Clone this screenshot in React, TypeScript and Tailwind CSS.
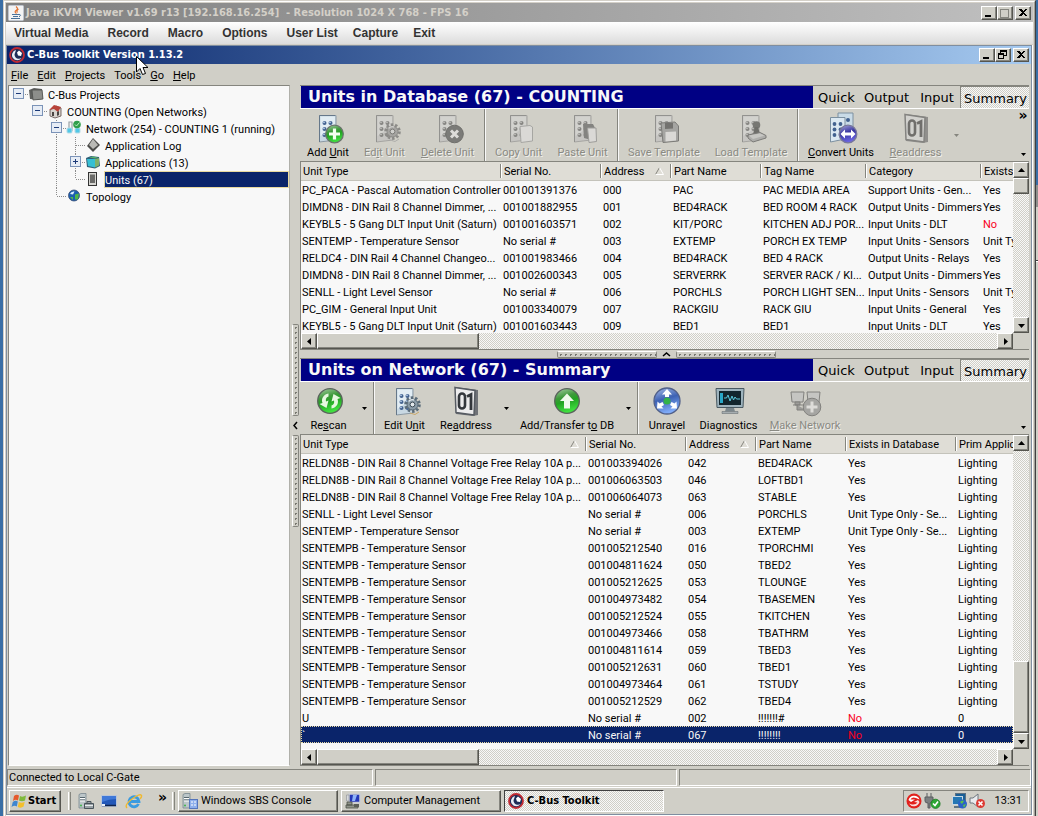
import type { ReactNode } from "react";

/* ---------- toolbar drawings ---------- */

function Sheet() {
  return (
    <>
      <path d="M6.500 1.500 L23 1.500 V26 L6.500 28 Z" fill="#c8d8e3" stroke="#8c9aa5" />
      <path d="M7.500 2.500 L22 2.500 V12 L7.500 22 Z" fill="#e2edf4" />
      <path d="M6.500 28 V1.500 H22" stroke="#66788a" fill="none" />
      {[9, 15, 21].map((y) => (
        <g key={y}>
          <circle cx="11.500" cy={y} r="2" fill="#41618f" />
          <circle cx="17.500" cy={y} r="2" fill="#41618f" />
          <circle cx="11" cy={y - 0.7} r="0.900" fill="#b9cfea" />
          <circle cx="17" cy={y - 0.7} r="0.900" fill="#b9cfea" />
        </g>
      ))}
    </>
  );
}

function Gear() {
  return (
    <>
      <circle cx="22.500" cy="17.500" r="6.800" fill="none" stroke="#5b6c79" strokeWidth="3" strokeDasharray="2.400 1.900" />
      <circle cx="22.500" cy="17.500" r="5.500" fill="#8a9ba7" stroke="#556673" />
      <circle cx="22.500" cy="17.500" r="2.400" fill="#e3e9ec" stroke="#3d4b56" />
      <path d="M18.500 14.500 A5 5 0 0 1 24 13" stroke="#dfe7ec" fill="none" strokeWidth="1.400" />
      <path d="M20 26 L25 27.500 L29 25" stroke="#c9a86a" fill="none" />
    </>
  );
}

function Digits() {
  return (
    <>
      <path d="M4 0 L27 3 L27 28 L22 29 L5 27 Z" fill="#6f7277" />
      <path d="M4 0.500 L24 3.500 L23 28 L5 25.500 Z" fill="#ececed" stroke="#565b62" strokeWidth="1.500" />
      <rect x="8" y="6.500" width="6" height="15" rx="3" fill="none" stroke="#33373c" strokeWidth="2.600" />
      <path d="M16 9.500 L20 7.500 V23" fill="none" stroke="#33373c" strokeWidth="2.800" />
    </>
  );
}

type IconName =
  | "add" | "edit" | "delete" | "copy" | "paste" | "save" | "load" | "convert" | "digits"
  | "rescan" | "transfer" | "unravel" | "diagnostics" | "network";

function ToolIcon({ name, disabled }: { name: IconName; disabled?: boolean }) {
  return (
    <svg width="32" height="31" viewBox="-1 0 32 31" aria-hidden="true" className={disabled ? "overflow-visible opacity-60 brightness-90 grayscale" : "overflow-visible"}>
      <defs>
        <linearGradient id="greenBall" x1="0" y1="0" x2="0.3" y2="1">
          <stop offset="0" stopColor="#a9cfa6" />
          <stop offset="0.4" stopColor="#3f9a3c" />
          <stop offset="0.6" stopColor="#23a323" />
          <stop offset="1" stopColor="#3fe03f" />
        </linearGradient>
        <linearGradient id="blueBall" x1="0" y1="0" x2="0.3" y2="1">
          <stop offset="0" stopColor="#a9bde8" />
          <stop offset="0.5" stopColor="#3d62b4" />
          <stop offset="1" stopColor="#7fabf8" />
        </linearGradient>
        <linearGradient id="violetBall" x1="0" y1="0" x2="0.3" y2="1">
          <stop offset="0" stopColor="#a8a8dc" />
          <stop offset="0.5" stopColor="#3a36a0" />
          <stop offset="1" stopColor="#6a64e0" />
        </linearGradient>
      </defs>
      {["add", "edit", "delete", "copy", "paste", "save", "load"].includes(name) && <Sheet />}
      {name === "add" && (
        <>
          <circle cx="21.500" cy="20" r="8.800" fill="url(#greenBall)" stroke="#6a746c" strokeWidth="1.300" />
          <path d="M21.500 14.500 V25.500 M16 20 H27" stroke="#f4fff0" strokeWidth="3.200" />
        </>
      )}
      {name === "edit" && <Gear />}
      {name === "delete" && (
        <>
          <circle cx="21.500" cy="20" r="8.800" fill="#4c4c4c" stroke="#333" />
          <path d="M18 16.500 L25 23.500 M25 16.500 L18 23.500" stroke="#fff" strokeWidth="3" />
        </>
      )}
      {name === "copy" && <path d="M16 12.500 L26 11.500 L28.500 13 L28.500 27 L17 28.500 Z" fill="#fafafa" stroke="#9a9a9a" />}
      {name === "paste" && (
        <>
          <path d="M15 10 L25 10 L27 14 V27 L16 24 Z" fill="#5a5a5a" />
          <path d="M19.500 14 L28 14 L28.500 27.500 L21 28.500 Z" fill="#fafafa" stroke="#8a8a8a" />
        </>
      )}
      {name === "save" && (
        <>
          <path d="M12 9 L26 8 L29.500 12 V27 L14 28.500 Z" fill="#999" stroke="#4a4a4a" />
          <path d="M16 9 L24 9 V14.500 L16 15 Z" fill="#3c3c3c" />
          <path d="M16.500 18 L27 17.500 V26.500 L16.500 27.500 Z" fill="#fafafa" />
        </>
      )}
      {name === "load" && (
        <>
          <circle cx="20.500" cy="11" r="3.800" fill="#444" />
          <path d="M19 13 H22 L24 20 H17 Z" fill="#333" />
          <path d="M12 21 L24 18.500 L30 21.500 V24 L17 28 L12 24 Z" fill="#aaa" stroke="#4a4a4a" />
          <path d="M13 21.500 L24 19.500 L28.500 21.500 L17 25 Z" fill="#d8d8d8" />
        </>
      )}
      {name === "convert" && (
        <>
          <path d="M12 -1 H27 V21 H12 Z" fill="#c9dbe7" stroke="#7c90a0" />
          <circle cx="22" cy="6" r="2" fill="#41618f" />
          <circle cx="16" cy="6" r="2" fill="#41618f" />
          <path d="M4.500 3.500 L19 3.500 V25 L4.500 28 Z" fill="#dbe8f1" stroke="#7c90a0" />
          {[10, 15.500, 21].map((y) => (
            <g key={y}>
              <circle cx="8.500" cy={y} r="1.900" fill="#41618f" />
              <circle cx="14.500" cy={y} r="1.900" fill="#41618f" />
            </g>
          ))}
          <circle cx="22" cy="20" r="8.800" fill="url(#violetBall)" stroke="#77779a" strokeWidth="1.300" />
          <path d="M14.500 20 L19 15.500 V18.500 H25 V15.500 L29.500 20 L25 24.500 V21.500 H19 V24.500 Z" fill="#fff" />
        </>
      )}
      {name === "digits" && <Digits />}
      {name === "rescan" && (
        <>
          <circle cx="16" cy="14" r="12.300" fill="url(#greenBall)" stroke="#5a635c" strokeWidth="1.300" />
          <path d="M14.500 6.500 C9 7.500 7 12 8.500 16 L5.500 17 L12.500 21 L14.500 13.500 L12 14.500 C11.500 12 12 10.500 14.500 9.500 Z" fill="#e6f8e0" />
          <path d="M17.500 21.500 C23 20.500 25 16 23.500 12 L26.500 11 L19.500 7 L17.500 14.500 L20 13.500 C20.500 16 20 17.500 17.500 18.500 Z" fill="#e6f8e0" />
        </>
      )}
      {name === "transfer" && (
        <>
          <circle cx="15" cy="14" r="12.300" fill="url(#greenBall)" stroke="#5a635c" strokeWidth="1.300" />
          <path d="M15 6.500 L22 14 H18 V21.500 H12 V14 H8 Z" fill="#f0fbec" />
        </>
      )}
      {name === "unravel" && (
        <>
          <circle cx="15" cy="14" r="13" fill="url(#blueBall)" stroke="#516089" strokeWidth="1.300" />
          <circle cx="15" cy="14" r="3.500" fill="#33b24a" />
          <path d="M15 2 L20 7.500 H17 V10 H13 V7.500 H10 Z" fill="#fff" />
          <path d="M5 21.500 L5.500 14.500 L7.500 16.500 L10.500 15 L12 18 L9.500 19.500 L11.500 21.500 Z" fill="#fff" />
          <path d="M25 21.500 L24.500 14.500 L22.500 16.500 L19.500 15 L18 18 L20.500 19.500 L18.500 21.500 Z" fill="#fff" />
        </>
      )}
      {name === "diagnostics" && (
        <>
          <path d="M2 1.500 H30 L29 20.500 H3 Z" fill="#9db3bd" stroke="#4a5a62" />
          <rect x="5" y="4" width="22" height="14" fill="#12262e" />
          <rect x="6" y="6" width="3" height="10" fill="#29a8c8" />
          <path d="M10 11 H12.500 L14 8 L16 14 L18 9 L19.500 13 L21 10 L22.500 12 H26" fill="none" stroke="#5ac8dc" />
          <path d="M12 21 H20 L21 24.500 H11 Z" fill="#7b878c" />
          <path d="M8 24.500 H24 V26.500 H8 Z" fill="#a5adb0" stroke="#5c6569" strokeWidth="0.500" />
        </>
      )}
      {name === "network" && (
        <>
          <path d="M1 5 H14 L13 15 H2 Z M17 5 H30 L29 15 H18 Z" fill="#d4d4d4" stroke="#555" />
          <path d="M5 15 H10 V18 H5 Z M18 15 H26 V18 H18 Z M3 18 H14 M7 18 V23 H16" fill="#888" stroke="#555" />
          <circle cx="22" cy="20" r="8.800" fill="#999" stroke="#555" />
          <path d="M22 14.500 V25.500 M16.500 20 H27.500" stroke="#fff" strokeWidth="3" />
        </>
      )}
    </svg>
  );
}

/* ---------- small window parts ---------- */

const DITHER =
  "bg-[repeating-conic-gradient(#f8f8f8_0_25%,#d0cfc7_0_50%)] bg-[length:2px_2px]";
const RAISED =
  "border border-t-white border-l-white border-r-[#55554f] border-b-[#55554f] bg-[#d0cfc7] shadow-[inset_-1px_-1px_0_#85857e]";

function CaptionButton({ kind, muted }: { kind: "min" | "max" | "restore" | "close"; muted?: boolean }) {
  return (
    <button
      type="button"
      aria-label={kind}
      className={`flex h-3.5 w-4 items-center justify-center ${kind === "close" ? "ml-0.5" : ""} ${RAISED}`}
    >
      <svg width="12" height="10" viewBox="0 0 12 10" aria-hidden="true" shapeRendering="crispEdges">
        {kind === "min" && <path d="M2 7 H8 V9 H2 Z" fill="#000" />}
        {kind === "max" && (
          <path d="M1.500 1 V9.500 H9.500 V1 Z M1 1.500 H10" fill="none" stroke={muted ? "#85857e" : "#000"} />
        )}
        {kind === "restore" && (
          <path d="M3.500 3 V0.500 H9.500 V5.500 H7 M3 1.500 H10 M1.500 3.500 H6.500 V8.500 H1.500 Z M1 4.500 H7" fill="none" stroke="#000" />
        )}
        {kind === "close" && (
          <path d="M2 1 H4 L6 3 L8 1 H10 L7 4.500 L10 8 H8 L6 6 L4 8 H2 L5 4.500 Z" fill="#000" />
        )}
      </svg>
    </button>
  );
}

function Arrow({ dir }: { dir: "up" | "down" | "left" | "right" }) {
  const paths = {
    up: "M1 6 L4.500 2 L8 6 Z",
    down: "M1 3 L4.500 7 L8 3 Z",
    left: "M6 1 L2 4.500 L6 8 Z",
    right: "M3 1 L7 4.500 L3 8 Z",
  };
  return (
    <svg width="9" height="9" viewBox="0 0 9 9" aria-hidden="true">
      <path d={paths[dir]} fill="#000" />
    </svg>
  );
}

function ScrollButton({ dir }: { dir: "up" | "down" | "left" | "right" }) {
  return (
    <button type="button" aria-label={`Scroll ${dir}`} className={`flex size-4 shrink-0 items-center justify-center ${RAISED}`}>
      <Arrow dir={dir} />
    </button>
  );
}

function HScroll() {
  return (
    <div className="flex h-4 shrink-0">
      <div className={`flex flex-1 ${DITHER}`}>
        <ScrollButton dir="left" />
        <div className={`w-[162px] ${RAISED}`} />
        <div className="flex-1" />
        <ScrollButton dir="right" />
      </div>
      <div className="w-4 bg-[#d0cfc7]" />
    </div>
  );
}

function VScroll({ atEnd }: { atEnd?: boolean }) {
  return (
    <div className={`flex w-4 shrink-0 flex-col ${DITHER}`}>
      <ScrollButton dir="up" />
      {atEnd && <div className="flex-1" />}
      <div className={`${atEnd ? "h-[72px]" : "h-4"} ${RAISED}`} />
      {!atEnd && <div className="flex-1" />}
      <ScrollButton dir="down" />
    </div>
  );
}

/* ---------- project tree ---------- */

type Cell = "blank" | "line" | "tee" | "end" | "minus" | "minusLine" | "plus";

function TreeCell({ kind }: { kind: Cell }) {
  const box = kind === "minus" || kind === "minusLine" || kind === "plus";
  return (
    <svg width="19" height="17" viewBox="0 0 19 17" aria-hidden="true" className="shrink-0" shapeRendering="crispEdges">
      <g stroke="#8c8c8c" strokeDasharray="1 1" fill="none">
        {(kind === "line" || kind === "tee" || kind === "minusLine" || kind === "plus") && <path d="M9.500 0 V17" />}
        {kind === "end" && <path d="M9.500 0 V8" />}
        {(kind === "tee" || kind === "end" || box) && <path d="M10 8.500 H19" />}
      </g>
      {box && (
        <>
          <rect x="4.500" y="2.500" width="10" height="10" fill="#e6ecf5" stroke="#7b93b8" />
          <path d="M7 7.500 H12" stroke="#1c3a78" />
          {kind === "plus" && <path d="M9.500 5 V10" stroke="#1c3a78" />}
        </>
      )}
    </svg>
  );
}

type TreeIconName = "folder" | "house" | "net" | "log" | "apps" | "unit" | "globe";

function TreeIcon({ name }: { name: TreeIconName }) {
  return (
    <svg width="17" height="17" viewBox="0 0 17 17" aria-hidden="true" className="shrink-0">
      {name === "folder" && (
        <>
          <path d="M1 4 L6 2 L14 3 L15 13 L10 14 L2 13 Z" fill="#5f605e" />
          <path d="M4 4 L14 4 L15 13 L5 14 Z" fill="#8d8e8b" stroke="#4e4f4d" strokeWidth="0.800" />
        </>
      )}
      {name === "house" && (
        <>
          <path d="M3 7 L9 3 L14 5 V13 L8 15 L3 13 Z" fill="#d8d4d0" stroke="#5a4a48" strokeWidth="0.800" />
          <path d="M2 7 L7 2 L14 4 L11 9 L7 6 Z" fill="#b8433a" />
          <path d="M5 9 H7 V13 H5 Z M10 9 L12 8 V12 L10 13 Z" fill="#4a4543" />
        </>
      )}
      {name === "net" && (
        <>
          <path d="M3 9 V2 H6 V11 M10 3 V11" fill="none" stroke="#9aa2a6" strokeWidth="1.200" />
          <rect x="1" y="8" width="5" height="5" rx="1" fill="#52c8e6" stroke="#b7dbe6" />
          <rect x="9" y="8" width="5" height="5" rx="1" fill="#52c8e6" stroke="#b7dbe6" />
          <circle cx="11" cy="4.500" r="3.800" fill="#2f9e4b" />
          <path d="M9 4.500 L10.500 6 L13.500 2.500" fill="none" stroke="#bff0c0" />
        </>
      )}
      {name === "log" && (
        <>
          <path d="M2 9 L8 1 L15 8 L8 15 Z" fill="#4b4b49" />
          <path d="M4 8 L8 2 L13 8 L8 12 Z" fill="#b9b9b5" />
        </>
      )}
      {name === "apps" && (
        <>
          <path d="M1 4 L6 2 L14 3 L15 12 L10 14.500 L2 13 Z" fill="#2d5f78" />
          <path d="M2 5 L10 5 L10 13.500 L3 12 Z" fill="#35bfd4" />
          <path d="M10 5 L14 4 L14 11.500 L10 13.500 Z" fill="#7fb06a" />
          <path d="M4 3.500 L8 2.500 L13 3.500 L10 4.500 Z" fill="#58b06a" />
        </>
      )}
      {name === "unit" && (
        <>
          <rect x="3.500" y="1.500" width="8" height="13" fill="#d6d6d2" stroke="#333" />
          <rect x="5" y="3.500" width="5" height="8.500" fill="#6a6a68" />
        </>
      )}
      {name === "globe" && (
        <>
          <circle cx="8" cy="7.500" r="5.500" fill="#1c5fb0" stroke="#3d5173" strokeWidth="0.800" />
          <path d="M9 6.500 L13 5.500 L12 11.500 L9 11.500 Z M4 9 L7 9 L7 12 Z" fill="#4fb84a" />
          <path d="M4 6 Q5 3 8.500 3.500 L7 6.500 Z" fill="#dff0ff" />
        </>
      )}
    </svg>
  );
}

const TREE: { cells: Cell[]; icon: TreeIconName; label: string; selected?: boolean }[] = [
  { cells: ["minus"], icon: "folder", label: "C-Bus Projects" },
  { cells: ["blank", "minus"], icon: "house", label: "COUNTING (Open Networks)" },
  { cells: ["blank", "blank", "minusLine"], icon: "net", label: "Network (254) - COUNTING 1 (running)" },
  { cells: ["blank", "blank", "line", "tee"], icon: "log", label: "Application Log" },
  { cells: ["blank", "blank", "line", "plus"], icon: "apps", label: "Applications (13)" },
  { cells: ["blank", "blank", "line", "end"], icon: "unit", label: "Units (67)", selected: true },
  { cells: ["blank", "blank", "end"], icon: "globe", label: "Topology" },
];

function ProjectTree() {
  return (
    <ul className="w-[282px] shrink-0 border border-[#85857e] border-r-[#b0b0aa] border-b-white bg-[#f8f8f8]">
      {TREE.map((row) => (
        <li key={row.label} className="flex h-[17px]">
          {row.cells.map((cell, i) => (
            <TreeCell key={i} kind={cell} />
          ))}
          <TreeIcon name={row.icon} />
          <span
            className={
              row.selected
                ? "ml-0.5 flex-1 border border-[#e8d9a0] bg-[#0a246a] pt-px leading-[15px] text-[#f8f8f8]"
                : "ml-0.5 flex-1 px-px pt-0.5 leading-[15px]"
            }
          >
            {row.label}
          </span>
        </li>
      ))}
    </ul>
  );
}

/* ---------- splitters ---------- */

function VSplitter() {
  const grip =
    "h-[92px] w-[7px] rounded-[2px] border border-[#85857e] border-l-white bg-[radial-gradient(circle,#77776f_1px,transparent_1px)] bg-[length:5px_5px]";
  return (
    <div className="flex w-2.5 shrink-0 flex-col items-center justify-center">
      <div className={grip} />
      <button type="button" aria-label="Collapse tree" className="flex h-[19px] items-center">
        <svg width="7" height="9" viewBox="0 0 7 9" aria-hidden="true"><path d="M5 1 L2 4.500 L5 8" fill="none" stroke="#000" strokeWidth="1.500" /></svg>
      </button>
      <div className={grip} />
    </div>
  );
}

function HSplitter() {
  const grip =
    "h-[7px] w-[100px] rounded-[2px] border border-[#85857e] border-t-white bg-[radial-gradient(circle,#77776f_1px,transparent_1px)] bg-[length:5px_5px]";
  return (
    <div className="flex h-2 shrink-0 items-center justify-center pl-1">
      <div className={grip} />
      <button type="button" aria-label="Collapse panel" className="flex w-[19px] justify-center">
        <svg width="9" height="7" viewBox="0 0 9 7" aria-hidden="true"><path d="M1 5 L4.500 2 L8 5" fill="none" stroke="#000" strokeWidth="1.500" /></svg>
      </button>
      <div className={grip} />
    </div>
  );
}

/* ---------- unit panels ---------- */

function PanelHeading({ title }: { title: string }) {
  const tab = "shrink-0 pt-px pl-px text-center text-[13px] leading-[21px] font-['DejaVu_Sans','Verdana',sans-serif]";
  return (
    <div className="flex h-6 shrink-0 border-t border-b border-t-[#85857e] border-b-white pl-px">
      <h2 className="flex-1 bg-[#000084] pl-[7px] font-['DejaVu_Sans','Verdana',sans-serif] text-[16px] leading-[21px] font-bold whitespace-nowrap text-[#f8f8f8]">
        {title}
      </h2>
      <button type="button" className={`w-[46px] ${tab}`}>Quick</button>
      <button type="button" className={`w-[54px] ${tab}`}>Output</button>
      <button type="button" className={`w-[47px] ${tab}`}>Input</button>
      <button type="button" className={`w-[69px] border-t border-l border-[#85857e] ${DITHER} ${tab}`}>Summary</button>
    </div>
  );
}

function ToolButton({ icon, width, disabled, children }: { icon: IconName; width: string; disabled?: boolean; children: ReactNode }) {
  return (
    <button
      type="button"
      disabled={disabled}
      className={`flex shrink-0 flex-col items-center gap-px pt-[5px] whitespace-nowrap leading-[14px] ${width} ${
        disabled ? "text-[#8a8a83] [text-shadow:1px_1px_0_#f0f0ec]" : ""
      }`}
    >
      <ToolIcon name={icon} disabled={disabled} />
      <span>{children}</span>
    </button>
  );
}

function Caret({ muted }: { muted?: boolean }) {
  return (
    <svg width="7" height="5" viewBox="0 0 7 5" aria-hidden="true">
      <path d="M1 1 H6 L3.500 4 Z" fill={muted ? "#85857e" : "#000"} />
    </svg>
  );
}

function DropArrow({ muted }: { muted?: boolean }) {
  return (
    <button type="button" aria-label="More options" className="flex w-3.5 shrink-0 items-center justify-center">
      <Caret muted={muted} />
    </button>
  );
}

function Divider() {
  return <div className="w-[3px] shrink-0 border-l border-[#85857e] shadow-[inset_1px_0_0_#f8f8f8]" />;
}

function GridTable({ columns, rows, sorted, fill }: {
  columns: { label: string; width: string }[];
  rows: string[][];
  sorted: string[];
  fill?: boolean;
}) {
  return (
    <div className={`flex min-h-0 flex-col border-t border-b border-l border-[#85857e] bg-[#f8f8f8] ${fill ? "flex-1" : "shrink-0"}`}>
      <div className={`flex min-h-0 ${fill ? "flex-1" : "h-[171px]"}`}>
        <div className="min-w-0 flex-1 overflow-hidden">
          <table className="w-full table-fixed border-collapse text-left whitespace-nowrap">
            <colgroup>
              {columns.map((c) => (
                <col key={c.label} className={c.width} />
              ))}
            </colgroup>
            <thead>
              <tr className="h-[19px] bg-[#dfddd6]">
                {columns.map((c) => (
                  <th key={c.label} scope="col" className="overflow-hidden p-0 font-normal">
                    <div className="flex h-[19px] items-center border-b border-[#c4c3bb] pl-0.5">
                      <span className="pt-0.5">{c.label}</span>
                      {sorted.includes(c.label) && (
                        <svg width="9" height="8" viewBox="0 0 9 8" aria-hidden="true" className="mr-1.5 ml-auto">
                          <path d="M4.500 0.500 L0.500 7.500" stroke="#85857e" />
                          <path d="M4.500 0.500 L8.500 7.500 H0.500" stroke="#fff" fill="none" />
                        </svg>
                      )}
                      <i className={`h-3.5 w-0.5 border-r border-l border-l-[#85857e] border-r-white ${sorted.includes(c.label) ? "" : "ml-auto"}`} />
                    </div>
                  </th>
                ))}
              </tr>
            </thead>
            <tbody>
              {rows.map((row, i) => {
                const selected = fill && i === rows.length - 1;
                return (
                  <tr
                    key={i}
                    className={selected ? "h-[17px] bg-[#0a246a] text-[#f8f8f8] outline-1 -outline-offset-1 outline-[#e8d9a0] outline-dotted" : "h-[17px]"}
                  >
                    {row.map((value, j) => (
                      <td key={j} className={`overflow-hidden pt-0.5 pr-0 pb-0 pl-px leading-[15px] ${value === "No" ? "text-[#f8001c]" : ""}`}>
                        {value}
                      </td>
                    ))}
                  </tr>
                );
              })}
            </tbody>
          </table>
        </div>
        <VScroll atEnd={fill} />
      </div>
      <HScroll />
    </div>
  );
}

const DB_COLUMNS = [
  { label: "Unit Type", width: "w-[201px]" },
  { label: "Serial No.", width: "w-[100px]" },
  { label: "Address", width: "w-[70px]" },
  { label: "Part Name", width: "w-[90px]" },
  { label: "Tag Name", width: "w-[105px]" },
  { label: "Category", width: "w-[115px]" },
  { label: "Exists", width: "w-auto" },
];

const DB_ROWS = [
  ["PC_PACA - Pascal Automation Controller", "001001391376", "000", "PAC", "PAC MEDIA AREA", "Support Units - Gen...", "Yes"],
  ["DIMDN8 - DIN Rail 8 Channel Dimmer, ...", "001001882955", "001", "BED4RACK", "BED ROOM 4 RACK", "Output Units - Dimmers", "Yes"],
  ["KEYBL5 - 5 Gang DLT Input Unit (Saturn)", "001001603571", "002", "KIT/PORC", "KITCHEN ADJ POR...", "Input Units - DLT", "No"],
  ["SENTEMP - Temperature Sensor", "No serial #", "003", "EXTEMP", "PORCH EX TEMP", "Input Units - Sensors", "Unit Ty"],
  ["RELDC4 - DIN Rail 4 Channel Changeo...", "001001983466", "004", "BED4RACK", "BED 4 RACK", "Output Units - Relays", "Yes"],
  ["DIMDN8 - DIN Rail 8 Channel Dimmer, ...", "001002600343", "005", "SERVERRK", "SERVER RACK / KI...", "Output Units - Dimmers", "Yes"],
  ["SENLL - Light Level Sensor", "No serial #", "006", "PORCHLS", "PORCH LIGHT SEN...", "Input Units - Sensors", "Unit Ty"],
  ["PC_GIM - General Input Unit", "001003340079", "007", "RACKGIU", "RACK GIU", "Input Units - General", "Yes"],
  ["KEYBL5 - 5 Gang DLT Input Unit (Saturn)", "001001603443", "009", "BED1", "BED1", "Input Units - DLT", "Yes"],
];

const NET_COLUMNS = [
  { label: "Unit Type", width: "w-[286px]" },
  { label: "Serial No.", width: "w-[100px]" },
  { label: "Address", width: "w-[70px]" },
  { label: "Part Name", width: "w-[90px]" },
  { label: "Exists in Database", width: "w-[110px]" },
  { label: "Prim Applica", width: "w-auto" },
];

const RELAY = "RELDN8B - DIN Rail 8 Channel Voltage Free Relay 10A p...";
const TEMP = "SENTEMPB - Temperature Sensor";

const NET_ROWS = [
  [RELAY, "001003394026", "042", "BED4RACK", "Yes", "Lighting"],
  [RELAY, "001006063503", "046", "LOFTBD1", "Yes", "Lighting"],
  [RELAY, "001006064073", "063", "STABLE", "Yes", "Lighting"],
  ["SENLL - Light Level Sensor", "No serial #", "006", "PORCHLS", "Unit Type Only - Se...", "Lighting"],
  ["SENTEMP - Temperature Sensor", "No serial #", "003", "EXTEMP", "Unit Type Only - Se...", "Lighting"],
  [TEMP, "001005212540", "016", "TPORCHMI", "Yes", "Lighting"],
  [TEMP, "001004811624", "050", "TBED2", "Yes", "Lighting"],
  [TEMP, "001005212625", "053", "TLOUNGE", "Yes", "Lighting"],
  [TEMP, "001004973482", "054", "TBASEMEN", "Yes", "Lighting"],
  [TEMP, "001005212524", "055", "TKITCHEN", "Yes", "Lighting"],
  [TEMP, "001004973466", "058", "TBATHRM", "Yes", "Lighting"],
  [TEMP, "001004811614", "059", "TBED3", "Yes", "Lighting"],
  [TEMP, "001005212631", "060", "TBED1", "Yes", "Lighting"],
  [TEMP, "001004973464", "061", "TSTUDY", "Yes", "Lighting"],
  [TEMP, "001005212529", "062", "TBED4", "Yes", "Lighting"],
  ["U", "No serial #", "002", "!!!!!!!#", "No", "0"],
  ["`", "No serial #", "067", "!!!!!!!!", "No", "0"],
];

function ToolbarEnd({ more }: { more?: boolean }) {
  return (
    <div className="ml-auto flex w-3 flex-col items-center justify-between pb-1">
      <span className="font-['DejaVu_Sans',sans-serif] text-[14px] leading-3 font-bold">{more ? "»" : ""}</span>
      <Caret />
    </div>
  );
}

/* ---------- brand marks and taskbar drawings ---------- */

function CBusLogo() {
  return (
    <svg width="16" height="16" viewBox="0 0 16 16" aria-hidden="true" className="shrink-0">
      <circle cx="8" cy="8" r="7" fill="#1d2c58" stroke="#c02a33" strokeWidth="1.800" />
      <path d="M7 3 A5.200 5.200 0 1 0 12.500 11 L11 11.500 A4 4 0 0 1 6 6 Z" fill="#e9edf5" />
      <path d="M8 5.500 L10 3.500 L13 6 L12 9 L9 8.500 Z" fill="#fff" />
    </svg>
  );
}

function JavaLogo() {
  return (
    <svg width="16" height="16" viewBox="0 0 16 16" aria-hidden="true" className="shrink-0">
      <rect x="0.500" y="0.500" width="15" height="15" rx="1" fill="#f3f3f3" stroke="#bfc5ce" />
      <path d="M8 1.500 Q11 4 8 5.500 Q6 7 8.500 8.500 M10.500 4 Q8 5.500 9.500 7.500" fill="none" stroke="#e2702d" strokeWidth="1.200" />
      <path d="M4 9.500 H11 M5 11.500 H10 M3 13.500 H12" stroke="#48729b" strokeWidth="1.200" />
      <path d="M11 9.500 Q14 9.500 11 12" fill="none" stroke="#48729b" />
    </svg>
  );
}

function WindowsFlag() {
  return (
    <svg width="16" height="16" viewBox="0 0 16 16" aria-hidden="true" className="shrink-0">
      <path d="M3 3 Q5.500 1 8 2.500 L7 7.500 Q4.500 6 2 8 Z" fill="#e5592b" />
      <path d="M9 3 Q11.500 4.500 15 2.500 L14 7.500 Q11 9 8 7.500 Z" fill="#7fb93c" />
      <path d="M1.800 9 Q4.500 7 6.800 8.500 L5.800 13.500 Q3.500 12 0.500 14 Z" fill="#3f86cf" />
      <path d="M7.800 9 Q10.500 10.500 13.700 8.800 L12.600 13.500 Q10 15.500 6.800 14 Z" fill="#f3bf2c" />
    </svg>
  );
}

function ServerIcon({ badge }: { badge: "case" | "panel" }) {
  return (
    <svg width="16" height="17" viewBox="0 0 16 17" aria-hidden="true" className="shrink-0">
      <path d="M1 1.500 L3 0.500 H8 V15 H1 Z" fill="#bcc6c9" stroke="#7a888f" strokeWidth="0.800" />
      <path d="M2 4.500 H7 M2 7 H7" stroke="#56656d" />
      <path d="M2 5.500 H7 M2 8 H7" stroke="#fff" />
      <circle cx="3" cy="12.500" r="1" fill="#3fb44a" />
      {badge === "case" ? (
        <>
          <path d="M6.500 10.500 H15.500 V15.500 H6.500 Z M9 10 V8.500 H13 V10" fill="#9aa2a6" stroke="#49545b" />
          <path d="M7 12.500 H15" stroke="#e8ecee" />
        </>
      ) : (
        <>
          <rect x="7.500" y="6.500" width="8" height="9" fill="#8fb0ec" stroke="#5575bb" />
          <path d="M9 9 H11 M12 9 H14 M9 12 H11 M12 12 H14" stroke="#fff" />
        </>
      )}
    </svg>
  );
}

function DesktopIcon() {
  return (
    <svg width="17" height="15" viewBox="0 0 17 15" aria-hidden="true">
      <rect x="0.500" y="1.500" width="15" height="11" fill="#2358b8" stroke="#b9c5d8" />
      <path d="M1 2 H15 V5 Q8 5 1 8 Z" fill="#3f78d8" />
      <path d="M1 11.500 H15" stroke="#10254f" strokeWidth="1.500" />
      <rect x="1" y="10" width="3" height="2" fill="#e8eef8" />
    </svg>
  );
}

function ExplorerIcon() {
  return (
    <svg width="18" height="17" viewBox="0 0 18 17" aria-hidden="true">
      <path d="M13.500 11 A5 5 0 1 1 14 8.500 H5" fill="none" stroke="#3a9be0" strokeWidth="2.800" />
      <path d="M2 15 Q-1 12 7 6 Q15 0 16.500 2.500 Q17 4 15 6" fill="none" stroke="#efb930" strokeWidth="1.400" />
    </svg>
  );
}

function ComputerIcon() {
  return (
    <svg width="16" height="16" viewBox="0 0 16 16" aria-hidden="true" className="shrink-0">
      <rect x="4" y="1" width="11" height="8.500" fill="#2438b8" stroke="#c9cdd4" strokeWidth="1.500" />
      <path d="M8 2 H12 L10 8 H7 Z" fill="#8fb4f8" />
      <path d="M1.500 2 H4 V8 H1.500 Z" fill="#d8dade" stroke="#8a8e94" strokeWidth="0.600" />
      <path d="M2 9 H7 V12 H2 Z M1 12 H13 V15 H1 Z" fill="#8f9389" stroke="#4c5048" strokeWidth="0.800" />
      <path d="M9 11 H14 V14 H9 Z" fill="#5a5e56" />
    </svg>
  );
}

function TrayIcons() {
  return (
    <>
      <svg width="16" height="16" viewBox="0 0 16 16" role="img" aria-label="Antivirus">
        <circle cx="8" cy="8" r="7.500" fill="#e2211c" />
        <path d="M2.500 7 A5.800 5.800 0 0 1 13.500 6.500 L10 5 Q6 3.500 4.500 6.500 L9 6.500 L5 9 Z" fill="#fff" />
        <path d="M13.500 9 A5.800 5.800 0 0 1 3 10.500 L6 11.500 Q10 12 11.500 9.500 L8 9 L12 7 Z" fill="#fbdcda" />
      </svg>
      <svg width="17" height="16" viewBox="0 0 17 16" role="img" aria-label="Safely remove hardware" className="ml-0.5">
        <path d="M3 0 V4 M7 0 V4 M1 4 H9 V8 Q9 10 6 10 V15 H4 V10 Q1 10 1 8 Z" fill="#7b7f80" stroke="#5a5e60" />
        <circle cx="11.500" cy="10.800" r="4.600" fill="#2da833" stroke="#1c7a22" strokeWidth="0.800" />
        <path d="M9 10.500 L11 12.500 L14 8.500" fill="none" stroke="#fff" strokeWidth="1.600" />
      </svg>
      <svg width="16" height="16" viewBox="0 0 16 16" role="img" aria-label="Network" className="ml-2.5">
        <rect x="4.500" y="0.500" width="10" height="8" fill="#1a5f96" stroke="#5b7184" />
        <rect x="1.500" y="3.500" width="10" height="8" fill="#2577b4" stroke="#c8d7e2" />
        <path d="M3 14 H10" stroke="#5f7482" strokeWidth="2" />
        <circle cx="11.500" cy="11" r="4.500" fill="#2a62c8" />
        <path d="M9 9 Q11 6.500 13 8 L11 11 Z M12 12 L15 11 L13 15 Z" fill="#59c04c" />
      </svg>
      <svg width="17" height="16" viewBox="0 0 17 16" role="img" aria-label="Muted" className="ml-0.5">
        <path d="M1 5 H4 L9 1 V14 L4 10 H1 Z" fill="#e9ebee" stroke="#6f777e" />
        <circle cx="11.500" cy="10.500" r="4.500" fill="#dd3a33" />
        <path d="M9.500 8.500 L13.500 12.500 M13.500 8.500 L9.500 12.500" stroke="#fff" strokeWidth="1.600" />
      </svg>
    </>
  );
}

function Grabber() {
  return <div className="my-0.5 w-[3px] border-r border-l border-l-white border-r-[#85857e] bg-[#d0cfc7]" />;
}

const TASK = "flex h-[22px] items-center gap-[3px] pl-[3px] text-left whitespace-nowrap";

export default function App() {
  return (
    <div className="flex min-h-screen w-full bg-[#3a6ea5] pl-[3px] font-['Roboto','Tahoma',sans-serif] text-[11px] text-black">
      <div className="flex min-w-0 flex-1 flex-col border-t border-r border-l border-t-[#d4d0c8] border-r-[#404040] border-l-[#d4d0c8]">
        <div className="flex flex-1 flex-col border-t border-r border-l border-t-white border-r-[#a0a09a] border-l-white bg-[#d4d0c8] px-px pt-px">
          {/* viewer caption */}
          <header className="flex h-[19px] shrink-0 items-center bg-linear-to-r from-[#808080] to-[#c0c0c0] pr-0.5 pl-0.5 text-[#d4d0c8]">
            <JavaLogo />
            <h1 className="flex-1 pt-px pl-0.5 font-['DejaVu_Sans_Condensed','Tahoma',sans-serif] font-bold whitespace-pre">Java iKVM Viewer v1.69 r13 [192.168.16.254]  - Resolution 1024 X 768 - FPS 16</h1>
            <CaptionButton kind="min" />
            <CaptionButton kind="max" muted />
            <CaptionButton kind="close" />
          </header>
          <nav className="flex h-[22px] shrink-0 items-center gap-[15px] bg-linear-to-b from-white to-[#dcdcdc] pl-2 font-['Liberation_Sans',Arial,sans-serif] text-[12px] font-bold text-[#333]">
            <div className="flex gap-[19px]">
              {["Virtual Media", "Record", "Macro", "Options", "User List"].map((item) => (
                <button key={item} type="button">{item}</button>
              ))}
            </div>
            <button type="button">Capture</button>
            <button type="button">Exit</button>
          </nav>

          <div className="mt-px flex flex-1 flex-col border-r border-b border-white">
            <div className="flex flex-1 flex-col border border-[#7f8ea0] bg-[#d0cfc7]">
              {/* toolkit caption */}
              <header className="relative flex h-[18px] shrink-0 items-center bg-linear-to-r from-[#0a246a] to-[#a6caf0] pr-0.5 pl-0.5 text-white">
                <CBusLogo />
                <h1 className="flex-1 pt-px pl-0.5 font-['DejaVu_Sans_Condensed','Tahoma',sans-serif] font-bold">C-Bus Toolkit Version 1.13.2</h1>
                <CaptionButton kind="min" />
                <CaptionButton kind="restore" />
                <CaptionButton kind="close" />
                <svg width="13" height="21" viewBox="0 0 13 21" aria-hidden="true" className="absolute top-2.5 left-[129px] z-10">
                  <path d="M0.500 0.500 V16 L4 12.500 L6.500 18.500 L9.500 17.500 L7 11.500 H12 Z" fill="#fff" stroke="#000" />
                </svg>
              </header>
              <nav className="flex h-[21px] shrink-0 items-center gap-[9px] pt-[3px] pl-1">
                <button type="button"><u>F</u>ile</button>
                <button type="button"><u>E</u>dit</button>
                <button type="button"><u>P</u>rojects</button>
                <button type="button">Tools</button>
                <button type="button"><u>G</u>o</button>
                <button type="button"><u>H</u>elp</button>
              </nav>

              <main className="flex flex-1 pr-0.5 pl-px">
                <ProjectTree />
                <VSplitter />
                <div className="flex min-w-0 flex-1 flex-col">
                  <PanelHeading title="Units in Database (67) - COUNTING" />
                  <div className="flex h-[52px] shrink-0">
                    <ToolButton icon="add" width="w-[56px]">Add <u>U</u>nit</ToolButton>
                    <ToolButton icon="edit" width="w-[57px]" disabled>Ed<u>i</u>t Unit</ToolButton>
                    <ToolButton icon="delete" width="w-[69px]" disabled><u>D</u>elete Unit</ToolButton>
                    <div className="w-0.5" />
                    <Divider />
                    <ToolButton icon="copy" width="w-[63px]" disabled>Copy Unit</ToolButton>
                    <ToolButton icon="paste" width="w-[65px]" disabled>Paste Unit</ToolButton>
                    <div className="w-0.5" />
                    <Divider />
                    <ToolButton icon="save" width="w-[88px]" disabled>Save Template</ToolButton>
                    <ToolButton icon="load" width="w-[86px]" disabled>Load Template</ToolButton>
                    <div className="w-[3px]" />
                    <Divider />
                    <ToolButton icon="convert" width="w-[82px]"><u>C</u>onvert Units</ToolButton>
                    <ToolButton icon="digits" width="w-[67px]" disabled><u>R</u>eaddress</ToolButton>
                    <DropArrow muted />
                    <ToolbarEnd more />
                  </div>
                  <GridTable columns={DB_COLUMNS} rows={DB_ROWS} sorted={["Address"]} />
                  <HSplitter />
                  <PanelHeading title="Units on Network (67) - Summary" />
                  <div className="flex h-[52px] shrink-0">
                    <ToolButton icon="rescan" width="w-[57px]">Re<u>s</u>can</ToolButton>
                    <DropArrow />
                    <div className="w-0.5" />
                    <Divider />
                    <ToolButton icon="edit" width="w-[57px]">Edit U<u>n</u>it</ToolButton>
                    <ToolButton icon="digits" width="w-[66px]">Re<u>a</u>ddress</ToolButton>
                    <DropArrow />
                    <ToolButton icon="transfer" width="w-[108px]">Add/Transfer t<u>o</u> DB</ToolButton>
                    <DropArrow />
                    <div className="w-0.5" />
                    <Divider />
                    <ToolButton icon="unravel" width="w-[54px]">Unra<u>v</u>el</ToolButton>
                    <ToolButton icon="diagnostics" width="w-[69px]">Diagnostics</ToolButton>
                    <ToolButton icon="network" width="w-[84px]" disabled><u>M</u>ake Network</ToolButton>
                    <ToolbarEnd />
                  </div>
                  <GridTable columns={NET_COLUMNS} rows={NET_ROWS} sorted={["Unit Type", "Address"]} fill />
                </div>
              </main>

              {/* status bar */}
              <div className="flex shrink-0 gap-0.5 border-b border-white pt-[3px] pb-px leading-4">
                <span className="h-[17px] w-[366px] border border-[#85857e] border-r-white border-b-white pl-px">Connected to Local C-Gate</span>
                <span className="h-[17px] w-[302px] border border-[#85857e] border-r-white border-b-white" />
                <span className="h-[17px] flex-1 border border-[#85857e] border-r-white border-b-white" />
              </div>

              {/* taskbar */}
              <footer className="flex h-[26px] shrink-0 items-center gap-[3px] px-0.5">
                <button type="button" className={`flex h-[22px] w-[52px] items-center gap-px pl-px font-['DejaVu_Sans_Condensed','Tahoma',sans-serif] font-bold ${RAISED}`}>
                  <WindowsFlag />
                  <span>Start</span>
                </button>
                <div className="flex h-[22px] w-[105px] gap-[7px]">
                  <div className="flex pl-1"><Grabber /></div>
                  <div className="flex flex-1 items-center gap-[7px]">
                    <ServerIcon badge="case" />
                    <DesktopIcon />
                    <ExplorerIcon />
                    <span className="mr-0.5 ml-auto self-start font-['DejaVu_Sans',sans-serif] text-[14px] leading-[14px] font-bold">»</span>
                  </div>
                </div>
                <div className="flex h-[22px]"><Grabber /></div>
                <button type="button" className={`w-40 ${TASK} ${RAISED}`}>
                  <ServerIcon badge="panel" />Windows SBS Console
                </button>
                <button type="button" className={`w-40 ${TASK} ${RAISED}`}>
                  <ComputerIcon />Computer Management
                </button>
                <button type="button" className={`w-40 border border-t-[#404040] border-r-white border-b-white border-l-[#404040] font-['DejaVu_Sans_Condensed','Tahoma',sans-serif] font-bold ${TASK} ${DITHER}`}>
                  <CBusLogo />C-Bus Toolkit
                </button>
                <div className="ml-auto flex h-[22px] w-[126px] items-center border border-[#85857e] border-r-white border-b-white pl-0.5">
                  <TrayIcons />
                  <time className="ml-auto pr-1.5">13:31</time>
                </div>
              </footer>
            </div>
          </div>
        </div>
      </div>
      {/* sliver of the desktop behind the window */}
      <div className="flex w-0.5 shrink-0 flex-col">
        <div className="h-[185px] bg-[#3a6ea5]" />
        <div className="h-[22px] bg-[#8f8f8c]" />
        <div className="h-[54px] border-b border-[#404040] bg-[#d0cfc7]" />
        <div className="flex-1 border-t border-white bg-[#d0cfc7]" />
      </div>
    </div>
  );
}
